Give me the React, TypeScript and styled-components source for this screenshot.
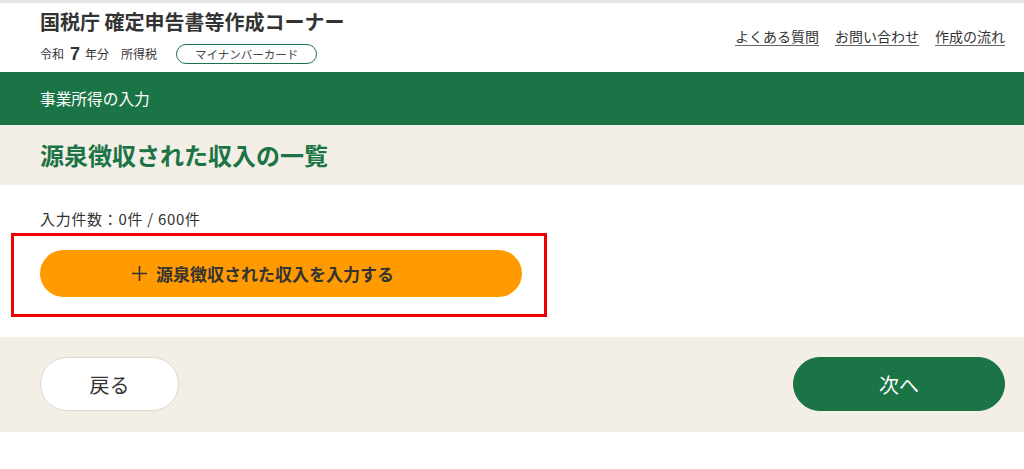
import React from "react";
import styled, { createGlobalStyle } from "styled-components";

const GREEN = "#1b7445";
const BEIGE = "#f3efe6";
const TEXT = "#333333";

const Global = createGlobalStyle`
  html, body { margin: 0; padding: 0; background: #fff; }
  body {
    font-family: "Noto Sans CJK JP", "Noto Sans", sans-serif;
    color: ${TEXT};
  }
  * { box-sizing: border-box; }
`;

const Page = styled.div`
  width: 1024px;
  min-height: 469px;
  display: flex;
  flex-direction: column;
  background: #fff;
`;

const Header = styled.header`
  height: 72px;
  border-top: 3px solid #e6e6e6;
  padding: 0 19px 0 40px;
  display: flex;
  justify-content: space-between;
  align-items: flex-start;
`;

const Brand = styled.div`
  display: flex;
  flex-direction: column;
`;

const SiteTitle = styled.h1`
  margin: 6px 0 0;
  font-size: 20px;
  line-height: 26px;
  font-weight: 700;
  color: ${TEXT};
`;

const Meta = styled.div`
  margin-top: 9px;
  display: flex;
  align-items: center;
  font-size: 12px;
  line-height: 20px;
  color: ${TEXT};
`;

const Year = styled.span`
  font-size: 18px;
  font-weight: 700;
  margin: 0 5px 0 6px;
  font-family: "Liberation Sans", "Noto Sans", sans-serif;
`;

const TaxName = styled.span`
  margin-left: 12px;
`;

const Badge = styled.span`
  margin-left: 19px;
  height: 20px;
  padding: 0 18px;
  display: inline-flex;
  align-items: center;
  border: 1.5px solid ${GREEN};
  border-radius: 10px;
  font-size: 11.5px;
  color: #3b4a42;
  letter-spacing: 0;
`;

const Links = styled.nav`
  margin-top: 23px;
  display: flex;
  gap: 16px;
`;

const Link = styled.a`
  font-size: 14px;
  line-height: 20px;
  color: ${TEXT};
  text-decoration: underline;
  text-underline-offset: 3px;
  text-decoration-color: #666;
`;

const StepBar = styled.div`
  height: 53px;
  background: ${GREEN};
  color: #fff;
  display: flex;
  align-items: center;
  padding: 0 40px;
  font-size: 15.7px;
`;

const TitleBand = styled.div`
  height: 60px;
  background: ${BEIGE};
  display: flex;
  align-items: center;
  padding: 0 40px;
`;

const PageTitle = styled.h2`
  margin: 0;
  font-size: 24px;
  font-weight: 700;
  color: ${GREEN};
  line-height: 32px;
`;

const Content = styled.section`
  height: 152px;
  padding: 24px 0 0 0;
  display: flex;
  flex-direction: column;
`;

const Count = styled.div`
  padding-left: 40px;
  font-size: 15px;
  line-height: 20px;
  letter-spacing: 0.7px;
  color: ${TEXT};
`;

const Highlight = styled.div`
  margin: 4px 0 0 11px;
  width: 536px;
  height: 84px;
  border: 3px solid #f00000;
  padding: 14px 22px 17px 26px;
  display: flex;
`;

const AddButton = styled.button`
  flex: 1;
  height: 47px;
  border: none;
  border-radius: 24px;
  background: #ff9b00;
  color: ${TEXT};
  font-family: inherit;
  font-size: 17px;
  font-weight: 700;
  display: flex;
  align-items: center;
  justify-content: center;
  gap: 9px;
  padding: 0 36px 0 0;
  cursor: pointer;
`;

const Footer = styled.footer`
  height: 95px;
  background: ${BEIGE};
  padding: 20px 19px 21px 40px;
  display: flex;
  justify-content: space-between;
  align-items: center;
`;

const NavButton = styled.button<{ $primary?: boolean; $w: number }>`
  width: ${(p) => p.$w}px;
  height: 54px;
  border-radius: 27px;
  border: 1px solid ${(p) => (p.$primary ? GREEN : "#ddd8cc")};
  background: ${(p) => (p.$primary ? GREEN : "#fff")};
  color: ${(p) => (p.$primary ? "#fff" : TEXT)};
  font-family: inherit;
  font-size: 20px;
  display: flex;
  align-items: center;
  justify-content: center;
  cursor: pointer;
`;

const Plus = () => (
  <svg width="15" height="15" viewBox="0 0 15 15" aria-hidden="true">
    <path d="M7.5 0v15M0 7.5h15" stroke="#333" strokeWidth="1.6" fill="none" />
  </svg>
);

export default function App() {
  return (
    <Page>
      <Global />
      <Header>
        <Brand>
          <SiteTitle>国税庁 確定申告書等作成コーナー</SiteTitle>
          <Meta>
            <span>令和</span>
            <Year>7</Year>
            <span>年分</span>
            <TaxName>所得税</TaxName>
            <Badge>マイナンバーカード</Badge>
          </Meta>
        </Brand>
        <Links>
          <Link href="#">よくある質問</Link>
          <Link href="#">お問い合わせ</Link>
          <Link href="#">作成の流れ</Link>
        </Links>
      </Header>
      <StepBar>事業所得の入力</StepBar>
      <TitleBand>
        <PageTitle>源泉徴収された収入の一覧</PageTitle>
      </TitleBand>
      <Content>
        <Count>入力件数：0件 / 600件</Count>
        <Highlight>
          <AddButton>
            <Plus />
            源泉徴収された収入を入力する
          </AddButton>
        </Highlight>
      </Content>
      <Footer>
        <NavButton $w={139}>戻る</NavButton>
        <NavButton $primary $w={212}>次へ</NavButton>
      </Footer>
    </Page>
  );
}
